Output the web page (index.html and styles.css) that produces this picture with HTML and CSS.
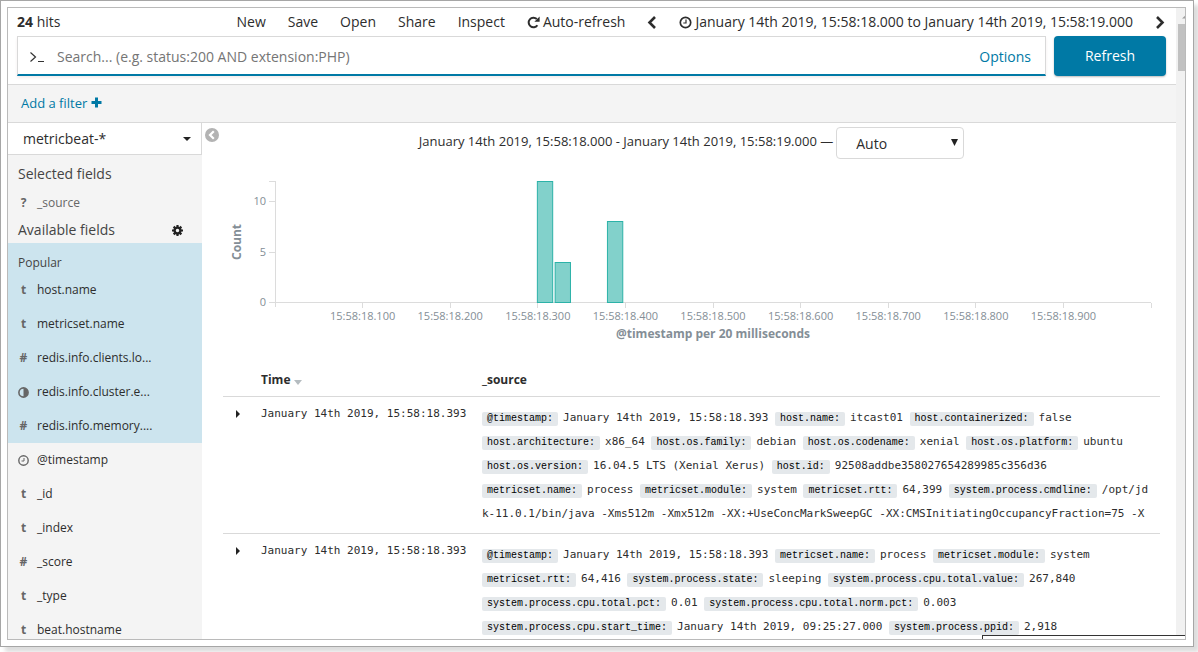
FILE: index.html
```html
<!DOCTYPE html>
<html lang="en">
<head>
<meta charset="utf-8">
<title>Discover</title>
<link rel="stylesheet" href="styles.css">
</head>
<body>
<div class="frame">
<div class="viewport">
<div class="app">
  <header class="topbar">
    <div class="hits"><strong>24</strong> hits</div>
    <nav class="menu">
      <button>New</button><button>Save</button><button>Open</button><button>Share</button><button>Inspect</button>
      <button class="with-icon"><svg class="icon" width="13" height="13" viewBox="0 0 13 13"><path d="M10.4 9.2A4.8 4.8 0 1 1 9.8 3" fill="none" stroke="currentColor" stroke-width="2"/><path d="M12.6.6v5.2H7.4z" fill="currentColor"/></svg>Auto-refresh</button>
      <button aria-label="Earlier"><svg class="icon" width="10" height="13" viewBox="0 0 10 13"><path d="M8 1 2.500 6.500 8 12" fill="none" stroke="currentColor" stroke-width="2.600"/></svg></button>
      <button class="with-icon"><svg class="icon" width="13" height="13" viewBox="0 0 13 13"><circle cx="6.500" cy="6.500" r="5.200" fill="none" stroke="currentColor" stroke-width="1.700"/><path d="M7 3.500V7H4.300" fill="none" stroke="currentColor" stroke-width="1.200"/></svg>January 14th 2019, 15:58:18.000 to January 14th 2019, 15:58:19.000</button>
      <button aria-label="Later"><svg class="icon" width="10" height="13" viewBox="0 0 10 13"><path d="M2 1 7.500 6.500 2 12" fill="none" stroke="currentColor" stroke-width="2.600"/></svg></button>
    </nav>
  </header>
  <form class="query">
    <div class="searchbox">
      <svg width="16" height="12" viewBox="0 0 16 12" aria-hidden="true"><path d="M1.500 1.500 6.500 6 1.500 10.500M9 10.500H15" fill="none" stroke="#333" stroke-width="1.200"/></svg>
      <input type="text" aria-label="Search" placeholder="Search... (e.g. status:200 AND extension:PHP)">
      <a href="#options">Options</a>
    </div>
    <button class="refresh" type="button">Refresh</button>
  </form>
  <div class="filterbar"><a href="#filter">Add a filter <svg width="11" height="11" viewBox="0 0 11 11"><path d="M5.500.500v10M.500 5.500h10" stroke="currentColor" stroke-width="3"/></svg></a></div>
  <div class="body">
    <aside class="sidebar">
      <div class="pattern">
        <select aria-label="Index pattern"><option>metricbeat-*</option></select>
        <svg width="8" height="4" viewBox="0 0 8 4"><path d="M0 0h8L4 4z" fill="#222"/></svg>
      </div>
      <h2>Selected fields</h2>
      <ul class="selected"><li><b>?</b><span>_source</span></li></ul>
      <h2 class="available">Available fields
        <button aria-label="Field settings"><svg width="11" height="11" viewBox="0 0 12 12"><circle cx="6" cy="6" r="3.200" fill="none" stroke="#222" stroke-width="2.600"/><path d="M6 0v2.500M6 9.500V12M0 6h2.500M9.500 6H12M1.800 1.800l1.700 1.700M8.500 8.500l1.700 1.700M10.200 1.800 8.500 3.500M3.500 8.500 1.800 10.200" stroke="#222" stroke-width="2.400"/></svg></button>
      </h2>
      <div class="popular">
        <h3>Popular</h3>
        <ul>
          <li><b>t</b><span>host.name</span></li>
          <li><b>t</b><span>metricset.name</span></li>
          <li><b>#</b><span>redis.info.clients.lo...</span></li>
          <li><b><svg width="11" height="11" viewBox="0 0 11 11"><circle cx="5.500" cy="5.500" r="4.600" fill="none" stroke="currentColor" stroke-width="1.600"/><path d="M5.500 1a4.500 4.500 0 0 1 0 9z" fill="currentColor"/></svg></b><span>redis.info.cluster.e...</span></li>
          <li><b>#</b><span>redis.info.memory....</span></li>
        </ul>
      </div>
      <ul>
        <li><b><svg width="11" height="11" viewBox="0 0 11 11"><circle cx="5.500" cy="5.500" r="4.700" fill="none" stroke="currentColor" stroke-width="1.400"/><path d="M6 3v3H3.500" fill="none" stroke="currentColor"/></svg></b><span>@timestamp</span></li>
        <li><b>t</b><span>_id</span></li>
        <li><b>t</b><span>_index</span></li>
        <li><b>#</b><span>_score</span></li>
        <li><b>t</b><span>_type</span></li>
        <li><b>t</b><span>beat.hostname</span></li>
      </ul>
    </aside>
    <main class="main">
      <button class="collapse" aria-label="Collapse sidebar"><svg width="14" height="14" viewBox="0 0 14 14"><circle cx="7" cy="7" r="7" fill="#b3b3b3"/><path d="M8.800 3.200 5 7l3.800 3.800" fill="none" stroke="#fff" stroke-width="2.200"/></svg></button>
      <div class="interval">
        <label for="interval">January 14th 2019, 15:58:18.000 - January 14th 2019, 15:58:19.000 —</label>
        <div class="picker">
          <select id="interval"><option>Auto</option></select>
          <svg width="7" height="7" viewBox="0 0 7 7"><path d="M0 0h7L3.500 7z" fill="#222"/></svg>
        </div>
      </div>
      <div class="chart">
        <div class="ylabel">Count</div>
        <svg class="plot" height="148" role="img" aria-label="Count per 20 milliseconds">
          <g stroke="#dcdcdc" shape-rendering="crispEdges">
            <path d="M-6 .500H.500V126M-6 20.500H0M-6 71.500H0M-6 121.500H0" fill="none"/>
            <line x1="0" x2="100%" y1="121.500" y2="121.500"/>
            <line x1="10%" x2="10%" y1="122" y2="127"/><line x1="20%" x2="20%" y1="122" y2="127"/><line x1="30%" x2="30%" y1="122" y2="127"/><line x1="40%" x2="40%" y1="122" y2="127"/><line x1="50%" x2="50%" y1="122" y2="127"/><line x1="60%" x2="60%" y1="122" y2="127"/><line x1="70%" x2="70%" y1="122" y2="127"/><line x1="80%" x2="80%" y1="122" y2="127"/><line x1="90%" x2="90%" y1="122" y2="127"/><line x1="100%" x2="100%" y1="122" y2="127"/>
          </g>
          <g class="bars">
            <rect x="29.950%" y="0.500" width="1.750%" height="121"/>
            <rect x="31.980%" y="81.500" width="1.750%" height="40"/>
            <rect x="37.950%" y="40.500" width="1.750%" height="81"/>
          </g>
          <g class="yticks"><text x="-9" y="24">10</text><text x="-9" y="75">5</text><text x="-9" y="125">0</text></g>
          <g class="xticks"><text x="10%" y="139">15:58:18.100</text><text x="20%" y="139">15:58:18.200</text><text x="30%" y="139">15:58:18.300</text><text x="40%" y="139">15:58:18.400</text><text x="50%" y="139">15:58:18.500</text><text x="60%" y="139">15:58:18.600</text><text x="70%" y="139">15:58:18.700</text><text x="80%" y="139">15:58:18.800</text><text x="90%" y="139">15:58:18.900</text></g>
        </svg>
        <div class="xlabel">@timestamp per 20 milliseconds</div>
      </div>
      <table class="docs">
        <colgroup><col class="c-toggle"><col class="c-time"><col></colgroup>
        <thead><tr><th></th><th>Time <svg width="8" height="5" viewBox="0 0 8 5"><path d="M0 0h8L4 5z" fill="#b5bcc0"/></svg></th><th>_source</th></tr></thead>
        <tbody>
          <tr>
            <td><button aria-label="Expand"><svg width="4" height="8" viewBox="0 0 4 8"><path d="M0 0l4 4-4 4z" fill="#222"/></svg></button></td>
            <td class="time">January 14th 2019, 15:58:18.393</td>
            <td class="source"><b>@timestamp:</b>January 14th 2019, 15:58:18.393 <b>host.name:</b>itcast01 <b>host.containerized:</b>false <b>host.architecture:</b>x86_64 <b>host.os.family:</b>debian <b>host.os.codename:</b>xenial <b>host.os.platform:</b>ubuntu <b>host.os.version:</b>16.04.5 LTS (Xenial Xerus) <b>host.id:</b>92508addbe358027654289985c356d36 <b>metricset.name:</b>process <b>metricset.module:</b>system <b>metricset.rtt:</b>64,399 <b>system.process.cmdline:</b><span>/opt/jd</span><wbr><span>k-11.0.1/bin/java -Xms512m -Xmx512m -XX:+UseConcMarkSweepGC -XX:CMSInitiatingOccupancyFraction=75 -X</span></td>
          </tr>
          <tr>
            <td><button aria-label="Expand"><svg width="4" height="8" viewBox="0 0 4 8"><path d="M0 0l4 4-4 4z" fill="#222"/></svg></button></td>
            <td class="time">January 14th 2019, 15:58:18.393</td>
            <td class="source"><b>@timestamp:</b>January 14th 2019, 15:58:18.393 <b>metricset.name:</b>process <b>metricset.module:</b>system <b>metricset.rtt:</b>64,416 <b>system.process.state:</b>sleeping <b>system.process.cpu.total.value:</b>267,840 <b>system.process.cpu.total.pct:</b>0.01 <b>system.process.cpu.total.norm.pct:</b>0.003 <b>system.process.cpu.start_time:</b>January 14th 2019, 09:25:27.000 <b>system.process.ppid:</b>2,918</td>
          </tr>
        </tbody>
      </table>
    </main>
  </div>
</div>
<div class="scrollbar"><svg width="9" height="16" viewBox="0 0 9 16"><path d="M9 6v4.500H4z" fill="#a0a0a0"/></svg><div class="thumb"></div></div>
<div class="corner"></div>
</div>
</div>
</body>
</html>
```

FILE: styles.css
```css
* { box-sizing: border-box; }
body { margin: 0; height: 100vh; padding: 0 4px 5px 0; background: #fff; overflow: hidden; font: 14px/20px "Open Sans", sans-serif; color: #2d2d2d; }
button { border: 0; padding: 0; background: none; font: inherit; color: inherit; }
select, input { font: inherit; color: inherit; }
ul { list-style: none; margin: 0; padding: 0; }
a { color: #0079a5; text-decoration: none; }
svg { flex: none; }

.frame { height: 100%; padding: 6px 7px 6px 6px; border: 1px solid #a6a6a6; box-shadow: 5px 5px 4px #ddd; background: #fff; }
.viewport { position: relative; display: flex; height: 100%; border: 1px solid #bababa; overflow: hidden; }
.app { flex: 1; min-width: 0; display: flex; flex-direction: column; }

.scrollbar { width: 9px; background: #f1f1f1; padding-left: 2px; }
.scrollbar svg { display: block; }
.thumb { height: 47px; background: #c1c1c1; }
.corner { position: absolute; right: 0; bottom: 0; width: 203px; height: 4px; border: solid #333; border-width: 1px 0 0 1px; background: #fff; }

.topbar { display: flex; justify-content: space-between; padding: 4px 11px 4px 9px; }
.menu { display: flex; gap: 22px; }
.menu button { display: flex; align-items: center; gap: 3px; white-space: nowrap; }

.query { display: flex; gap: 8px; padding: 0 10px 8px 9px; border-bottom: 1px solid #d9d9d9; }
.searchbox { flex: 1; display: flex; align-items: center; height: 40px; padding: 2px 14px 0 11px; border: 1px solid #d9d9d9; border-bottom: 2px solid #0079a5; box-shadow: 0 2px 3px #f4eeee; }
.searchbox input { flex: 1; min-width: 0; margin-left: 12px; padding: 0; border: 0; outline: 0; background: none; }
.searchbox input::placeholder { color: #757575; opacity: 1; }
.refresh { width: 112px; height: 40px; border-radius: 4px; background: #0079a5; color: #fff; box-shadow: 0 1px 2px #bbb; }

.filterbar { padding: 8px 13px 9px; background: #f4f4f4; border-bottom: 1px solid #d9d9d9; font-size: 13px; }
.body { flex: 1; min-height: 0; display: flex; overflow: hidden; }

.sidebar { flex: none; width: 194px; background: #f4f4f4; font-size: 12px; }
.pattern { display: grid; align-items: center; border: solid #d9d9d9; border-width: 0 1px 1px 0; background: #fff; }
.pattern select, .pattern svg, .picker select, .picker svg { grid-area: 1 / 1; }
.pattern svg { justify-self: end; margin-right: 10px; pointer-events: none; }
.pattern select { appearance: none; width: 100%; height: 31px; padding: 0 15px; border: 0; background: none; font-size: 14px; }
.sidebar h2 { margin: 0; padding: 8px 10px 9px; font-size: 14px; font-weight: 400; line-height: 22px; color: #444; }
.sidebar h2.available { display: flex; justify-content: space-between; align-items: center; padding: 0 19px 2px 10px; }
.available button { display: flex; }
.popular { background: #cce4ee; }
.popular h3 { margin: 0; padding: 10px 10px 0; font-size: 12px; font-weight: 400; color: #444; }
.sidebar li { display: flex; align-items: center; height: 34px; padding-left: 10px; }
.sidebar .selected li { height: 17px; margin-bottom: 8px; color: #666; }
.sidebar li b { width: 11px; margin-right: 8px; display: flex; justify-content: center; color: #666; font-size: 12px; }

.main { position: relative; flex: 1; min-width: 0; padding: 4px 16px 0 21px; }
.collapse { position: absolute; left: 3px; top: 5px; display: flex; }
.interval { display: flex; justify-content: center; gap: 3px; font-size: 13px; line-height: 28px; }
.picker { display: grid; align-items: center; }
.picker svg { justify-self: end; margin: 0 6px 1px 0; pointer-events: none; }
.picker select { appearance: none; width: 128px; height: 32px; padding: 1px 19px 0; border: 1px solid #d9d9d9; border-radius: 4px; background: #fff; font-size: 14px; }

.chart { display: grid; grid-template-columns: 52px 1fr; padding: 22px 9px 0 0; }
.ylabel { writing-mode: vertical-rl; transform: rotate(180deg); height: 122px; text-align: center; line-height: 16px; margin-left: 6px; justify-self: start; font-size: 12px; font-weight: 700; color: #848e96; }
.plot { display: block; width: 100%; overflow: visible; font-size: 11px; fill: #848e96; }
.bars rect { fill: #82d1cb; stroke: #2cb2a8; }
.yticks { text-anchor: end; }
.xticks { text-anchor: middle; }
.xlabel { grid-column: 2; line-height: 16px; margin-top: -3px; text-align: center; font-size: 12px; font-weight: 700; color: #848e96; }

.docs { width: 100%; margin-top: 22px; border-collapse: separate; border-spacing: 0; table-layout: fixed; font: 11px/24px "DejaVu Sans Mono", monospace; }
.c-toggle { width: 30px; }
.c-time { width: 221px; }
.docs th { padding: 8px; font: bold 12px/16px "Open Sans", sans-serif; text-align: left; }
.docs th svg { vertical-align: -1px; }
.docs td { padding: 9px 8px 7px; border-top: 1px solid #d9d9d9; vertical-align: top; }
.docs td button { display: flex; align-items: center; height: 16px; margin-left: 5px; }
.docs .time { line-height: 16px; white-space: nowrap; }
.source b { display: inline-block; margin-right: 5px; padding: 0 5px; border-radius: 2px; background: #e4e8eb; color: #000; font: 10px/14px "Liberation Mono", monospace; }
```
